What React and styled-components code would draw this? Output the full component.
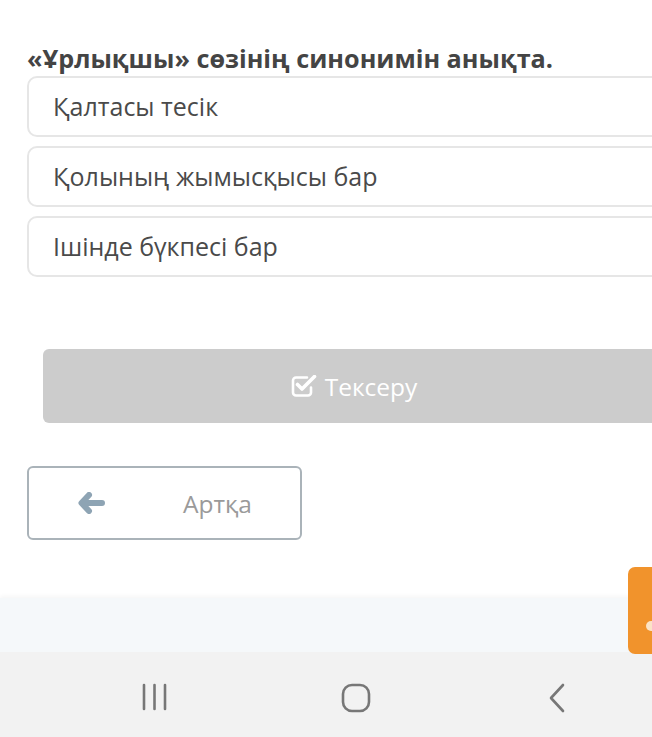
import React from "react";
import styled, { createGlobalStyle } from "styled-components";

const Global = createGlobalStyle`
  html, body { margin: 0; padding: 0; background: #ffffff; }
  body { font-family: "Open Sans", "Noto Sans", sans-serif; }
`;

const Page = styled.div`
  position: relative;
  width: 652px;
  height: 737px;
  overflow: hidden;
  display: flex;
  flex-direction: column;
  background: #ffffff;
`;

const Content = styled.main`
  flex: 1;
  padding: 43px 0 0 27px;
  display: flex;
  flex-direction: column;
`;

const Question = styled.h2`
  margin: 0 0 3px;
  font-size: 25.2px;
  line-height: 30px;
  font-weight: 700;
  color: #444444;
  white-space: nowrap;
`;

const Options = styled.div`
  display: flex;
  flex-direction: column;
  gap: 9px;
`;

const Option = styled.div`
  width: 660px;
  height: 61px;
  box-sizing: border-box;
  border: 2px solid #e6e6e6;
  border-radius: 10px;
  display: flex;
  align-items: center;
  padding-left: 24px;
  padding-bottom: 2px;
  font-size: 25px;
  color: #4a4a4a;
  white-space: nowrap;
`;

const CheckButton = styled.button`
  margin: 72px 0 0 16px;
  width: 622px;
  height: 74px;
  border: none;
  border-radius: 6px;
  background: #cccccc;
  color: #ffffff;
  font-family: inherit;
  font-size: 24.5px;
  display: flex;
  align-items: center;
  justify-content: center;
  gap: 8px;
  padding: 0;
`;

const BackButton = styled.button`
  margin: 43px 0 0 0;
  width: 275px;
  height: 74px;
  box-sizing: border-box;
  border: 2px solid #aab3b9;
  border-radius: 6px;
  background: #ffffff;
  font-family: inherit;
  font-size: 24.5px;
  color: #9a9a9a;
  display: flex;
  align-items: center;
  padding: 0 0 0 49px;
`;

const BackLabel = styled.span`
  margin-left: 77px;
`;

const Band = styled.div`
  height: 54px;
  background: #f5f8fa;
  box-shadow: 0 -2px 4px rgba(0, 0, 0, 0.04);
`;

const NavBar = styled.nav`
  height: 85px;
  background: #f2f2f2;
  display: grid;
  grid-template-columns: 310px 200px 142px;
  align-items: start;
  padding-top: 31px;
  box-sizing: border-box;
`;

const NavItem = styled.div`
  display: flex;
  justify-content: ${(p) => p.$justify || "center"};
  padding-left: ${(p) => p.$pl || 0}px;
`;

const SideTab = styled.div`
  position: absolute;
  left: 628px;
  top: 567px;
  width: 40px;
  height: 87px;
  border-radius: 7px;
  background: #f1932c;
`;

const TabDot = styled.div`
  position: absolute;
  left: 18px;
  top: 54px;
  width: 10px;
  height: 10px;
  border-radius: 50%;
  background: #fbe3c6;
`;

const CheckIcon = () => (
  <svg width="26" height="22" viewBox="0 0 26 22" fill="none">
    <path
      d="M16 2.5H5a3 3 0 0 0-3 3v12a3 3 0 0 0 3 3h12a3 3 0 0 0 3-3v-5"
      stroke="#ffffff"
      strokeWidth="2.6"
      strokeLinecap="round"
    />
    <path
      d="M6.5 9.5l4.5 4.5L23.5 1.5"
      stroke="#ffffff"
      strokeWidth="3.6"
      strokeLinecap="round"
      strokeLinejoin="round"
    />
  </svg>
);

const ArrowIcon = () => (
  <svg width="28" height="22" viewBox="0 0 28 22">
    <path
      d="M11 3L3.5 11 11 19M4.5 11H24"
      fill="none"
      stroke="#8ea4b4"
      strokeWidth="6"
      strokeLinecap="round"
      strokeLinejoin="round"
    />
  </svg>
);

const RecentsIcon = () => (
  <svg width="27" height="28" viewBox="0 0 27 28">
    <g stroke="#777" strokeWidth="2.6" strokeLinecap="round">
      <line x1="3" y1="2" x2="3" y2="26" />
      <line x1="13.5" y1="2" x2="13.5" y2="26" />
      <line x1="24" y1="2" x2="24" y2="26" />
    </g>
  </svg>
);

const HomeIcon = () => (
  <svg width="30" height="30" viewBox="0 0 30 30">
    <rect x="2" y="2" width="26" height="26" rx="9" fill="none" stroke="#777" strokeWidth="2.6" />
  </svg>
);

const BackIcon = () => (
  <svg width="18" height="30" viewBox="0 0 18 30">
    <path d="M15 2L3 15l12 13" fill="none" stroke="#777" strokeWidth="2.6" strokeLinecap="round" strokeLinejoin="round" />
  </svg>
);

const options = ["Қалтасы тесік", "Қолының жымысқысы бар", "Ішінде бүкпесі бар"];

export default function App() {
  return (
    <>
      <Global />
      <Page>
        <Content>
          <Question>«Ұрлықшы» сөзінің синонимін анықта.</Question>
          <Options>
            {options.map((o) => (
              <Option key={o}>{o}</Option>
            ))}
          </Options>
          <CheckButton>
            <CheckIcon />
            <span>Тексеру</span>
          </CheckButton>
          <BackButton>
            <ArrowIcon />
            <BackLabel>Артқа</BackLabel>
          </BackButton>
        </Content>
        <Band />
        <NavBar>
          <NavItem $justify="flex-start" $pl={141}>
            <RecentsIcon />
          </NavItem>
          <NavItem $justify="flex-start" $pl={31}>
            <HomeIcon />
          </NavItem>
          <NavItem $justify="flex-start" $pl={38}>
            <BackIcon />
          </NavItem>
        </NavBar>
        <SideTab>
          <TabDot />
        </SideTab>
      </Page>
    </>
  );
}
